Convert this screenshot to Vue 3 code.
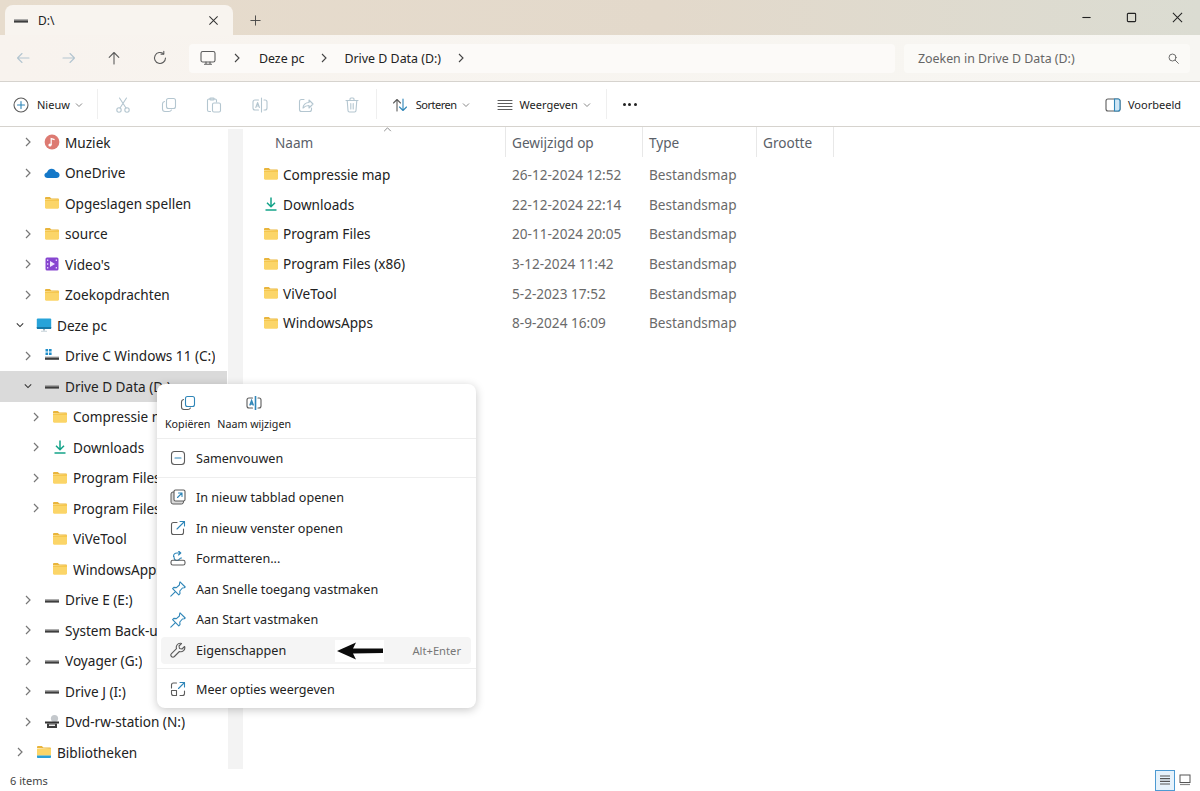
<script setup>
// Inner markup of the icons, all drawn on a 16x16 box
const folder = '<path d="M1 4V3.2C1 2.5 1.5 2 2.2 2h3.6l1.6 1.4h6.4c.7 0 1.2.5 1.2 1.2V5z" fill="#e9b53c"/><path d="M1 4.6h14v8c0 .7-.5 1.2-1.2 1.2H2.2c-.7 0-1.2-.5-1.2-1.2z" fill="#fbd568"/><path d="M1 4.6h14v1.3H1z" fill="#f4c64d"/>'
const drive = '<path d="M1 7.2h14v1.2H1z" fill="#9a9a9a"/><path d="M1 8.4h14v2.2H1z" fill="#3d3d3d"/>'
const grey = 'fill="none" stroke="#5c5c5c" stroke-width="1.1" stroke-linecap="round" stroke-linejoin="round"'
const off = 'fill="none" stroke="#b4c6d0" stroke-width="1.1" stroke-linecap="round" stroke-linejoin="round"'
const blue = 'fill="none" stroke="#2f86b8" stroke-width="1.1" stroke-linecap="round" stroke-linejoin="round"'

const icons = {
  folder,
  drive,
  download: '<path d="M8 1.5v9M4 6.8l4 4 4-4" fill="none" stroke="#13a389" stroke-width="1.5"/><path d="M2.5 14h11" stroke="#13a389" stroke-width="1.5"/>',
  music: '<circle cx="8" cy="8" r="7.4" fill="#dd7a72"/><path d="M7.2 11V4.6l3.4 1" fill="none" stroke="#fff" stroke-width="1.2"/><circle cx="6" cy="11" r="1.6" fill="#fff"/>',
  onedrive: '<path d="M3.6 13C1.8 13 .4 11.8.4 10.2c0-1.500 1.100-2.600 2.600-2.800C3.600 5.300 5.400 3.800 7.600 3.800c2 0 3.600 1.100 4.300 2.900 2.200 0 3.700 1.500 3.700 3.200 0 1.800-1.400 3.100-3.200 3.100z" fill="#1478c8"/>',
  video: '<rect x="1.500" y="1.500" width="13" height="13" rx="1.500" fill="#8746d0"/><path d="M6 5l5 3-5 3z" fill="#f0e6ff"/><path d="M3 3.500h1.300v1.500H3zM3 7.200h1.300v1.500H3zM3 11h1.300v1.500H3zM11.700 3.500H13v1.500h-1.300zM11.700 11H13v1.500h-1.300z" fill="#e4d4fa"/>',
  pc: '<rect x=".8" y="1.500" width="14.400" height="10.500" rx="1" fill="#27a3d9"/><path d="M.8 10h14.400v1c0 .6-.4 1-1 1H1.800c-.6 0-1-.4-1-1z" fill="#1578a8"/><path d="M7 12h2v1.600H7z" fill="#9fb4bf"/><path d="M5 13.800h6v.8H5z" fill="#b8c6ce"/>',
  drivec: '<path d="M1.500 1h2.600v2.600H1.500zM5 1h2.600v2.600H5zM1.500 4.500h2.600v2.600H1.500zM5 4.500h2.600v2.600H5z" fill="#1f8ec9"/>' + '<path d="M1 8.600h14v1H1z" fill="#9a9a9a"/><path d="M1 9.600h14v2.200H1z" fill="#3d3d3d"/>',
  dvd: '<circle cx="10.500" cy="4.500" r="3.600" fill="#c4c8cc"/><path d="M1 7.500h14v2H1z" fill="#333"/><path d="M3 9.500h10v4.500H3z" fill="#3d3d3d"/><path d="M5 10.500h6v1.500H5z" fill="#eee"/>',
  library: '<path d="M1 4V3.200C1 2.500 1.500 2 2.200 2h3.600l1.600 1.400h6.400c.7 0 1.200.5 1.200 1.200V5z" fill="#e9b53c"/><path d="M1 4.600h14v7H1z" fill="#fbd568"/><path d="M1 11.500h14v1.500c0 .6-.4 1-1 1H2c-.6 0-1-.4-1-1z" fill="#2a9fd6"/>',

  back: '<path d="M14 8H2.500M7 3.500 2.500 8 7 12.500" ' + off + '/>',
  forward: '<path d="M2 8h11.500M9 3.500 13.500 8 9 12.500" ' + off + '/>',
  up: '<path d="M8 14V2.500M3.200 7.300 8 2.500l4.800 4.800" ' + grey + '/>',
  refresh: '<path d="M13.500 8A5.500 5.500 0 1 1 11.600 3.800" ' + grey + '/><path d="M11.800 1.200v2.900H9" ' + grey + '/>',
  monitor: '<rect x="1" y="1.500" width="14" height="10.500" rx="1.800" ' + grey + '/><path d="M6 12v2M10 12v2M4.500 14.200h7" ' + grey + '/>',
  search: '<circle cx="6.800" cy="6.800" r="4.300" ' + grey + '/><path d="m10 10 4 4" ' + grey + '/>',

  plus: '<circle cx="8" cy="8" r="7" ' + grey + '/><path d="M8 4.500v7M4.500 8h7" ' + blue + '/>',
  cut: '<circle cx="4" cy="13" r="2.200" ' + off + '/><circle cx="12" cy="13" r="2.200" ' + off + '/><path d="M5 11 11.500 1M11 11 4.500 1" ' + off + '/>',
  copyOff: '<rect x="5.500" y="1.500" width="9" height="10" rx="2" ' + off + '/><path d="M3.500 4.500c-1.200.3-2 1.200-2 2.500v5c0 1.400 1 2.500 2.500 2.500h4c1.200 0 2-.7 2.400-1.500" ' + off + '/>',
  paste: '<path d="M4.500 14.500H3c-.8 0-1.500-.7-1.500-1.500V3.500C1.500 2.700 2.200 2 3 2h6c.8 0 1.500.7 1.500 1.500V5" ' + off + '/><rect x="4" y="1" width="4" height="2" rx=".6" ' + off + '/><rect x="6.500" y="6" width="8" height="9" rx="1.500" ' + off + '/>',
  renameOff: '<path d="M6.500 3H3C1.900 3 1 3.900 1 5v6c0 1.100.9 2 2 2h3.500M12 3h1c1.100 0 2 .9 2 2v6c0 1.100-.9 2-2 2h-1M9.500 1v14" ' + off + '/><path d="m3.800 10.500 1.800-5 1.800 5M4.400 9h2.400" ' + off + '/>',
  share: '<path d="M6 2.500H3.500c-1.100 0-2 .9-2 2v8c0 1.100.9 2 2 2h8c1.100 0 2-.9 2-2V11" ' + off + '/><path d="M5 11c0-3 2.500-5.500 6-5.500V3l4 4-4 4V8.500c-2.500 0-4.500 1-6 2.500z" ' + off + '/>',
  trash: '<path d="M2 3.500h12M6 3.500V2c0-.5.4-1 1-1h2c.6 0 1 .5 1 1v1.500M3.200 3.500 4 13.500c0 .8.700 1.500 1.500 1.500h5c.8 0 1.500-.7 1.500-1.500l.8-10M6.800 6.500v5.500M9.200 6.500v5.500" ' + off + '/>',
  sort: '<path d="M5 14V2.500M1.500 6 5 2.500 8.500 6" ' + grey + '/><path d="M11 2v11.500M7.500 10l3.500 3.500 3.500-3.500" ' + blue + '/>',
  list: '<path d="M1 3.500h14M1 6.500h14M1 9.500h14M1 12.500h14" ' + grey + '/>',
  preview: '<rect x="1" y="2" width="14" height="12" rx="2" ' + grey + '/><path d="M9.500 2H13c1.100 0 2 .9 2 2v8c0 1.100-.9 2-2 2H9.500z" fill="#cfe6f5" stroke="#2f86b8" stroke-width="1.100"/>',

  copy: '<rect x="5.500" y="1.500" width="9" height="10" rx="2" ' + blue + '/><path d="M3.500 4.500c-1.200.3-2 1.200-2 2.500v5c0 1.400 1 2.500 2.500 2.500h4c1.200 0 2-.7 2.400-1.500" ' + grey + '/>',
  rename: '<path d="M6.500 3H3C1.900 3 1 3.900 1 5v6c0 1.100.9 2 2 2h3.500M12 3h1c1.100 0 2 .9 2 2v6c0 1.100-.9 2-2 2h-1" ' + grey + '/><path d="M9.500 1v14" fill="none" stroke="#2f86b8" stroke-width="1.600"/><path d="m3.800 10.500 1.800-5 1.800 5M4.400 9h2.400" fill="none" stroke="#2f86b8" stroke-width="1.400"/>',
  collapse: '<rect x="1.500" y="1.500" width="13" height="13" rx="3" ' + grey + '/><path d="M5 8h6" ' + blue + '/>',
  newtab: '<path d="M3 3.500v8.500c0 1 .8 1.800 1.800 1.800H12" ' + grey + '/><rect x="1" y="3" width="12.500" height="12" rx="2" fill="#d9d9d9" stroke="#5c5c5c" stroke-width="1"/><rect x="4" y="1" width="11" height="11" rx="1.500" fill="#fff" stroke="#5c5c5c" stroke-width="1.100"/><path d="M7.500 8.500 12 4M8.500 4H12v3.500" ' + blue + '/>',
  newwin: '<path d="M7 2.500H3.500c-1.100 0-2 .9-2 2v8c0 1.100.9 2 2 2h8c1.100 0 2-.9 2-2V9" ' + grey + '/><path d="M7 9 14.500 1.500M10 1.500h4.500V6" ' + blue + '/>',
  format: '<path d="M3.500 5.500C3.500 3.500 5 2 7 2h3.500M8.500 0l2.300 2-2.300 2" ' + blue + '/><path d="M4 5.500c0 2 1 4 3 4 2.500 0 2.500-3 4.500-2.500" ' + blue + '/><path d="M1 11c0-1 .8-1.800 1.800-1.800h10.400c1 0 1.800.8 1.800 1.800v1.200c0 1-.8 1.800-1.800 1.800H2.800c-1 0-1.800-.8-1.800-1.800z" ' + grey + '/>',
  pin: '<path d="M10 .8 15.200 6l-1 .8-1.800.2-2.600 3 .2 2.600-1.200 1.200-6.200-6.200L3.800 6.400l2.600.2 3-2.600.2-1.800z" ' + blue + '/><path d="M5.200 10.800.8 15.200" ' + blue + '/>',
  wrench: '<path d="M10.300 1.300a4 4 0 0 0-3.800 5.300L1.500 11.600a2 2 0 0 0 2.900 2.900l5-5a4 4 0 0 0 5.200-5L12 7 9.500 6.500 9 4l2.500-2.500a4 4 0 0 0-1.200-.2z" ' + grey + '/>',
  more: '<path d="M6.500 2H3.500c-1.100 0-2 .9-2 2v3M1.500 10v2.500c0 1.100.9 2 2 2H6.500v-5h-5M10 14.500h2.500c1.100 0 2-.9 2-2V10" ' + grey + '/><path d="M8.500 7.500 14.500 1.500M10 1.500h4.500V6" ' + blue + '/>'
}

const actions = ['cut', 'copyOff', 'paste', 'renameOff', 'share', 'trash']

const tree = [
  { name: 'Muziek', icon: 'music', level: 1, chevron: 'right' },
  { name: 'OneDrive', icon: 'onedrive', level: 1, chevron: 'right' },
  { name: 'Opgeslagen spellen', icon: 'folder', level: 1 },
  { name: 'source', icon: 'folder', level: 1, chevron: 'right' },
  { name: "Video's", icon: 'video', level: 1, chevron: 'right' },
  { name: 'Zoekopdrachten', icon: 'folder', level: 1, chevron: 'right' },
  { name: 'Deze pc', icon: 'pc', level: 0, chevron: 'down' },
  { name: 'Drive C Windows 11 (C:)', icon: 'drivec', level: 1, chevron: 'right' },
  { name: 'Drive D Data (D:)', icon: 'drive', level: 1, chevron: 'down', selected: true },
  { name: 'Compressie map', icon: 'folder', level: 2, chevron: 'right' },
  { name: 'Downloads', icon: 'download', level: 2, chevron: 'right' },
  { name: 'Program Files', icon: 'folder', level: 2, chevron: 'right' },
  { name: 'Program Files (x86)', icon: 'folder', level: 2, chevron: 'right' },
  { name: 'ViVeTool', icon: 'folder', level: 2 },
  { name: 'WindowsApps', icon: 'folder', level: 2 },
  { name: 'Drive E (E:)', icon: 'drive', level: 1, chevron: 'right' },
  { name: 'System Back-up (F:)', icon: 'drive', level: 1, chevron: 'right' },
  { name: 'Voyager (G:)', icon: 'drive', level: 1, chevron: 'right' },
  { name: 'Drive J (I:)', icon: 'drive', level: 1, chevron: 'right' },
  { name: 'Dvd-rw-station (N:)', icon: 'dvd', level: 1, chevron: 'right' },
  { name: 'Bibliotheken', icon: 'library', level: 0, chevron: 'right' }
]

const files = [
  { name: 'Compressie map', icon: 'folder', date: '26-12-2024 12:52' },
  { name: 'Downloads', icon: 'download', date: '22-12-2024 22:14' },
  { name: 'Program Files', icon: 'folder', date: '20-11-2024 20:05' },
  { name: 'Program Files (x86)', icon: 'folder', date: '3-12-2024 11:42' },
  { name: 'ViVeTool', icon: 'folder', date: '5-2-2023 17:52' },
  { name: 'WindowsApps', icon: 'folder', date: '8-9-2024 16:09' }
]

const menuItems = [
  { label: 'In nieuw tabblad openen', icon: 'newtab' },
  { label: 'In nieuw venster openen', icon: 'newwin' },
  { label: 'Formatteren...', icon: 'format' },
  { label: 'Aan Snelle toegang vastmaken', icon: 'pin' },
  { label: 'Aan Start vastmaken', icon: 'pin' },
  { label: 'Eigenschappen', icon: 'wrench', hint: 'Alt+Enter', active: true }
]
</script>

<template>
  <div class="window">
    <div class="titlebar">
      <div class="tab">
        <svg class="ico" viewBox="0 0 16 16" v-html="icons.drive"></svg>
        <span class="tab-title">D:\</span>
        <svg class="tab-close" viewBox="0 0 12 12"><path d="M1.500 1.500l9 9M10.500 1.500l-9 9" stroke="#333" stroke-width="1.100"/></svg>
      </div>
      <div class="tab-add">
        <svg viewBox="0 0 12 12"><path d="M6 .5v11M.5 6h11" stroke="#444" stroke-width="1"/></svg>
      </div>
      <div class="win-controls">
        <div class="win-btn"><svg viewBox="0 0 12 12"><path d="M1.500 6h9" stroke="#222" stroke-width="1.200"/></svg></div>
        <div class="win-btn"><svg viewBox="0 0 12 12"><rect x="1.500" y="1.500" width="9" height="9" rx="1" fill="none" stroke="#222" stroke-width="1.200"/></svg></div>
        <div class="win-btn"><svg viewBox="0 0 12 12"><path d="M1 1l10 10M11 1 1 11" stroke="#222" stroke-width="1.100"/></svg></div>
      </div>
    </div>

    <div class="addressbar">
      <div class="nav-btn"><svg class="ico" viewBox="0 0 16 16" v-html="icons.back"></svg></div>
      <div class="nav-btn"><svg class="ico" viewBox="0 0 16 16" v-html="icons.forward"></svg></div>
      <div class="nav-btn"><svg class="ico" viewBox="0 0 16 16" v-html="icons.up"></svg></div>
      <div class="nav-btn"><svg class="ico" viewBox="0 0 16 16" v-html="icons.refresh"></svg></div>
      <div class="crumbs">
        <svg class="ico crumb-pc" viewBox="0 0 16 16" v-html="icons.monitor"></svg>
        <svg class="crumb-sep" viewBox="0 0 8 10"><path d="M2 1l4 4-4 4" fill="none" stroke="#444" stroke-width="1.100"/></svg>
        <span>Deze pc</span>
        <svg class="crumb-sep" viewBox="0 0 8 10"><path d="M2 1l4 4-4 4" fill="none" stroke="#444" stroke-width="1.100"/></svg>
        <span>Drive D Data (D:)</span>
        <svg class="crumb-sep" viewBox="0 0 8 10"><path d="M2 1l4 4-4 4" fill="none" stroke="#444" stroke-width="1.100"/></svg>
      </div>
      <div class="searchbox">
        <span>Zoeken in Drive D Data (D:)</span>
        <svg class="search-ico" viewBox="0 0 16 16" v-html="icons.search"></svg>
      </div>
    </div>

    <div class="toolbar">
      <div class="tool tool-new">
        <svg class="ico" viewBox="0 0 16 16" v-html="icons.plus"></svg>
        <span>Nieuw</span>
        <svg class="caret" viewBox="0 0 8 6"><path d="M1 1.500l3 3 3-3" fill="none" stroke="#888" stroke-width="1"/></svg>
      </div>
      <div class="tool-sep"></div>
      <div class="actions">
        <div v-for="a in actions" :key="a" class="action">
          <svg class="ico" viewBox="0 0 16 16" v-html="icons[a]"></svg>
        </div>
      </div>
      <div class="tool-sep sep-b"></div>
      <div class="tool tool-sort">
        <svg class="ico" viewBox="0 0 16 16" v-html="icons.sort"></svg>
        <span>Sorteren</span>
        <svg class="caret" viewBox="0 0 8 6"><path d="M1 1.500l3 3 3-3" fill="none" stroke="#888" stroke-width="1"/></svg>
      </div>
      <div class="tool tool-view">
        <svg class="ico" viewBox="0 0 16 16" v-html="icons.list"></svg>
        <span>Weergeven</span>
        <svg class="caret" viewBox="0 0 8 6"><path d="M1 1.500l3 3 3-3" fill="none" stroke="#888" stroke-width="1"/></svg>
      </div>
      <div class="tool-sep sep-c"></div>
      <div class="dots"><i></i><i></i><i></i></div>
      <div class="tool tool-preview">
        <svg class="ico" viewBox="0 0 16 16" v-html="icons.preview"></svg>
        <span>Voorbeeld</span>
      </div>
    </div>

    <div class="content">
      <div class="sidebar">
        <div
          v-for="row in tree"
          :key="row.name"
          class="tree-row"
          :class="['lvl-' + row.level, { selected: row.selected }]"
        >
          <span class="twisty">
            <svg v-if="row.chevron === 'right'" viewBox="0 0 8 10"><path d="M2 1l4 4-4 4" fill="none" stroke="#777" stroke-width="1.200"/></svg>
            <svg v-if="row.chevron === 'down'" viewBox="0 0 10 8"><path d="M1 2l4 4 4-4" fill="none" stroke="#333" stroke-width="1.300"/></svg>
          </span>
          <svg class="ico tree-ico" viewBox="0 0 16 16" v-html="icons[row.icon]"></svg>
          <span class="tree-label">{{ row.name }}</span>
        </div>
      </div>
      <div class="scrolltrack"></div>

      <div class="main">
        <div class="file-grid file-head">
          <div class="col-head col-name">Naam<svg class="sort-caret" viewBox="0 0 10 6"><path d="M1 5l4-4 4 4" fill="none" stroke="#777" stroke-width="1"/></svg></div>
          <div class="col-head">Gewijzigd op</div>
          <div class="col-head">Type</div>
          <div class="col-head">Grootte</div>
        </div>
        <div class="file-list">
          <div v-for="f in files" :key="f.name" class="file-grid file-row">
            <div class="cell-name">
              <svg class="ico" viewBox="0 0 16 16" v-html="icons[f.icon]"></svg>
              <span>{{ f.name }}</span>
            </div>
            <div class="cell-muted">{{ f.date }}</div>
            <div class="cell-muted">Bestandsmap</div>
            <div></div>
          </div>
        </div>
      </div>
    </div>

    <div class="statusbar">
      <span>6 items</span>
      <div class="view-btns">
        <div class="view-btn on">
          <svg viewBox="0 0 12 12"><path d="M1 2h10M1 4.700h10M1 7.400h10M1 10h10" stroke="#555" stroke-width="1.200"/></svg>
        </div>
        <div class="view-btn">
          <svg viewBox="0 0 12 12"><rect x="1" y="1" width="10" height="7.500" fill="none" stroke="#555" stroke-width="1"/><path d="M1 10.500h10" stroke="#888" stroke-width="1.200"/></svg>
        </div>
      </div>
    </div>

    <!-- Context menu lies over the tree and the file list -->
    <div class="menu">
      <div class="menu-top">
        <div class="menu-action">
          <svg class="ico" viewBox="0 0 16 16" v-html="icons.copy"></svg>
          <span>Kopiëren</span>
        </div>
        <div class="menu-action">
          <svg class="ico" viewBox="0 0 16 16" v-html="icons.rename"></svg>
          <span>Naam wijzigen</span>
        </div>
      </div>
      <div class="menu-group solo">
        <div class="menu-item">
          <svg class="ico" viewBox="0 0 16 16" v-html="icons.collapse"></svg>
          <span>Samenvouwen</span>
        </div>
      </div>
      <div class="menu-group main-group">
        <div v-for="m in menuItems" :key="m.label" class="menu-item" :class="{ active: m.active }">
          <svg class="ico" viewBox="0 0 16 16" v-html="icons[m.icon]"></svg>
          <span>{{ m.label }}</span>
          <span v-if="m.hint" class="hint">{{ m.hint }}</span>
        </div>
      </div>
      <div class="menu-group last">
        <div class="menu-item">
          <svg class="ico" viewBox="0 0 16 16" v-html="icons.more"></svg>
          <span>Meer opties weergeven</span>
        </div>
      </div>
      <!-- Black arrow added on top of the screenshot -->
      <svg class="arrow" viewBox="0 0 49 22"><rect width="49" height="22" fill="#fff"/><path d="M2 11 21 2.500 18 8.500 48 8.500V13L18 13.500 21 19.500z" fill="#0c0c0c"/></svg>
    </div>
  </div>
</template>

<style>
html, body {
  margin: 0;
  background: #fff;
}
</style>

<style scoped>
.window {
  position: relative;
  width: 1200px;
  height: 791px;
  overflow: hidden;
  display: flex;
  flex-direction: column;
  background: #fff;
  color: #222;
  font-family: "Noto Sans", "Open Sans", sans-serif;
  font-size: 13.6px;
}

.ico {
  width: 16px;
  height: 16px;
  flex: none;
}

/* Title bar */
.titlebar {
  height: 35px;
  flex: none;
  display: flex;
  background: linear-gradient(90deg, #e7dccd 0%, #e3d9cb 55%, #dbdcd2 100%);
}
.tab {
  width: 228px;
  height: 30px;
  margin: 5px 0 0 5px;
  box-sizing: border-box;
  padding: 0 14px 0 8px;
  display: flex;
  align-items: center;
  background: #f8f4ef;
  border-radius: 8px 8px 0 0;
}
.tab-title {
  margin-left: 9px;
  font-size: 12px;
}
.tab-close {
  width: 11px;
  height: 11px;
  margin-left: auto;
}
.tab-add {
  width: 44px;
  display: flex;
  align-items: center;
  justify-content: center;
  padding-top: 5px;
}
.tab-add svg {
  width: 11px;
  height: 11px;
}
.win-controls {
  margin-left: auto;
  display: flex;
}
.win-btn {
  width: 45.5px;
  display: flex;
  align-items: center;
  justify-content: center;
  padding-bottom: 1px;
}
.win-btn svg {
  width: 11px;
  height: 11px;
}

/* Address bar */
.addressbar {
  height: 46px;
  flex: none;
  display: flex;
  align-items: center;
  background: linear-gradient(90deg, #f8f3ee, #f7f6f2);
  border-bottom: 1px solid #d6d3ce;
}
.nav-btn {
  width: 45.7px;
  display: flex;
  justify-content: center;
}
.crumbs {
  width: 706px;
  height: 29px;
  margin-left: 6.200px;
  display: flex;
  align-items: center;
  background: #fcfaf8;
  border-radius: 4px;
  font-size: 12.400px;
}
.crumb-pc {
  margin-left: 11px;
}
.crumb-sep {
  width: 8px;
  height: 10px;
  margin: 0 16px;
}
.crumbs .crumb-pc + .crumb-sep {
  margin: 0 18px 0 17px;
}
.searchbox {
  width: 286px;
  height: 29px;
  margin-left: 9px;
  box-sizing: border-box;
  padding: 0 10px 0 14px;
  display: flex;
  align-items: center;
  justify-content: space-between;
  background: #fbfaf7;
  border-radius: 4px;
  color: #666;
  font-size: 12.400px;
}
.search-ico {
  width: 13px;
  height: 13px;
}

/* Command bar */
.toolbar {
  height: 44px;
  flex: none;
  display: flex;
  align-items: center;
  background: #fff;
  border-bottom: 1px solid #d6d3ce;
  font-size: 11px;
}
.tool {
  display: flex;
  align-items: center;
  padding-top: 1px;
}
.tool-new {
  width: 97px;
  padding-left: 13px;
  box-sizing: border-box;
}
.tool-new span {
  margin-left: 8px;
}
.caret {
  width: 8px;
  height: 6px;
  margin-left: 5px;
}
.tool-sep {
  width: 1px;
  height: 30px;
  background: #efefef;
  flex: none;
}
.actions {
  display: flex;
  margin-left: 2px;
  padding-top: 1px;
}
.action {
  width: 45.8px;
  display: flex;
  justify-content: center;
}
.sep-b {
  margin-left: 1px;
}
.tool-sort {
  margin-left: 15px;
}
.tool-sort span {
  margin-left: 8px;
  letter-spacing: -0.5px;
}
.tool-view {
  margin-left: 27px;
}
.tool-view span {
  margin-left: 7px;
}
.sep-c {
  margin-left: 15px;
}
.dots {
  margin-left: 16px;
  display: flex;
  gap: 2.500px;
}
.dots i {
  width: 3px;
  height: 3px;
  border-radius: 50%;
  background: #222;
}
.tool-preview {
  margin-left: auto;
  padding-right: 19px;
}
.tool-preview span {
  margin-left: 7px;
}

/* Body */
.content {
  flex: 1;
  min-height: 0;
  display: flex;
}
.sidebar {
  width: 228px;
  flex: none;
  overflow: hidden;
}
.tree-row {
  height: 30.500px;
  display: flex;
  align-items: center;
  white-space: nowrap;
}
.tree-row.selected {
  background: #dadada;
  margin-right: 1px;
}
.lvl-0 {
  padding-left: 16px;
}
.lvl-1 {
  padding-left: 24px;
}
.lvl-2 {
  padding-left: 32px;
}
.twisty {
  width: 20px;
  height: 12px;
  flex: none;
  display: flex;
  align-items: center;
}
.twisty svg {
  width: 8px;
  height: 10px;
}
.tree-ico {
  margin-right: 5px;
}
.tree-label {
  overflow: hidden;
}
.scrolltrack {
  width: 15px;
  flex: none;
  margin-top: 2px;
  background: #f3f3f3;
}

.main {
  flex: 1;
  min-width: 0;
}
.file-grid {
  display: grid;
  grid-template-columns: 263px 137px 114px 77px;
}
.file-head {
  height: 30px;
  color: #5a6068;
}
.col-head {
  position: relative;
  display: flex;
  align-items: center;
  padding-left: 6px;
  border-right: 1px solid #e8e8e8;
}
.col-name {
  padding-left: 32px;
}
.sort-caret {
  position: absolute;
  left: 140px;
  top: 0;
  width: 9px;
  height: 5px;
}
.file-list {
  padding-top: 2.600px;
}
.file-row {
  height: 29.700px;
  align-items: center;
}
.file-row > .cell-muted {
  padding-left: 6px;
  color: #6a6a6a;
}
.cell-name {
  display: flex;
  align-items: center;
  padding-left: 20px;
}
.cell-name span {
  margin-left: 4px;
}

.statusbar {
  height: 22px;
  flex: none;
  display: flex;
  align-items: center;
  justify-content: space-between;
  padding-left: 10px;
  font-size: 11px;
  color: #444;
}
.view-btns {
  display: flex;
  margin-right: 5px;
}
.view-btn {
  width: 20px;
  height: 21px;
  box-sizing: border-box;
  display: flex;
  align-items: center;
  justify-content: center;
  border: 1px solid transparent;
}
.view-btn.on {
  background: #e6f2fb;
  border-color: #4d9ad2;
}
.view-btn svg {
  width: 12px;
  height: 12px;
}

/* Context menu */
.menu {
  position: absolute;
  left: 157px;
  top: 384px;
  width: 319px;
  height: 324px;
  background: #fff;
  border-radius: 8px;
  box-shadow: 0 2px 10px rgba(0, 0, 0, 0.22);
  font-size: 12.600px;
}
.menu-top {
  height: 55px;
  box-sizing: border-box;
  padding: 11px 0 0 8px;
  display: flex;
  gap: 7px;
  border-bottom: 1px solid #eee;
  font-size: 10.700px;
}
.menu-action {
  display: flex;
  flex-direction: column;
  align-items: center;
  gap: 6px;
}
.menu-group {
  border-bottom: 1px solid #eee;
}
.solo {
  height: 38px;
  display: flex;
  align-items: center;
}
.solo .menu-item {
  flex: 1;
}
.main-group {
  display: flex;
  flex-direction: column;
  padding: 4.200px 0 2.500px;
}
.last {
  border-bottom: 0;
  padding-top: 4.500px;
}
.menu-item {
  height: 26.600px;
  margin: 2px 5px 2px 4px;
  box-sizing: border-box;
  padding: 0 10px 0 9px;
  display: flex;
  align-items: center;
  gap: 10px;
  border-radius: 4px;
}
.menu-item.active {
  background: #f5f5f5;
}
.hint {
  margin-left: auto;
  color: #777;
  font-size: 11.200px;
}
.arrow {
  position: absolute;
  left: 178px;
  top: 256px;
  width: 49px;
  height: 22px;
}
</style>
